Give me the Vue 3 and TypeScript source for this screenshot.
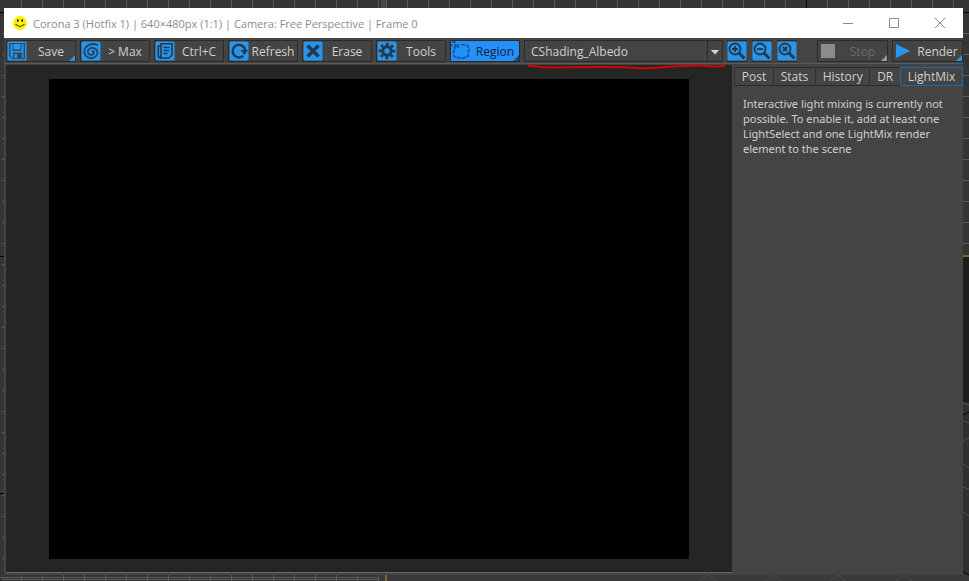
<script setup lang="ts">
import { ref } from 'vue'

interface Tool {
  id: string
  label: string
  menu?: boolean
}

const tools: Tool[] = [
  { id: 'save', label: 'Save', menu: true },
  { id: 'max', label: '> Max' },
  { id: 'copy', label: 'Ctrl+C' },
  { id: 'refresh', label: 'Refresh' },
  { id: 'erase', label: 'Erase' },
  { id: 'tools', label: 'Tools' },
  { id: 'region', label: 'Region', menu: true },
]
const zooms = [
  { id: 'in', label: 'Zoom in', d: 'M5 8h6M8 5v6' },
  { id: 'out', label: 'Zoom out', d: 'M5 8h6' },
  { id: 'reset', label: 'Reset zoom', d: 'M6 6l4 4M10 6l-4 4' },
]
const tabs = ['Post', 'Stats', 'History', 'DR', 'LightMix']
const activeTab = ref('LightMix')
const regionOn = ref(true)
const element = ref('CShading_Albedo')

function press(id: string) {
  if (id === 'region') regionOn.value = !regionOn.value
}
</script>

<template>
  <div class="desktop">
    <svg class="scene" aria-hidden="true">
      <defs>
        <pattern id="grid-left" width="21" height="21" patternUnits="userSpaceOnUse">
          <path d="M0.5 0V21M0 12.5H21" stroke="#5a5a5a" fill="none" />
        </pattern>
        <pattern id="grid-right" width="21" height="21" patternUnits="userSpaceOnUse">
          <path d="M8.5 0V21M0 12.5H21" stroke="#5a5a5a" fill="none" />
        </pattern>
      </defs>
      <rect width="100%" height="100%" fill="#353535" />
      <rect x="2" width="380" height="100%" fill="url(#grid-left)" />
      <rect x="386" width="100%" height="100%" fill="url(#grid-right)" />
      <rect x="381" y="0" width="5" height="8" fill="#484848" />
      <path d="M806.5 0V8M963 12.5H969M0 12.5H4M0 256.5H4M0 493.5H4" stroke="#050505" />
      <rect x="380" y="574" width="589" height="7" fill="#393939" />
      <path d="M0 577.5H379" stroke="#5a5a5a" />
      <path d="M386 575V581" stroke="#75683b" stroke-width="2" />
      <path d="M700 581l8-6 8 6M765 581l8-6 8 6M830 581l8-6 8 6M896 581l8-6 8 6" stroke="#4b4b4b" fill="none" />
      <rect x="963" y="257" width="6" height="145" fill="#1d1d1c" />
      <rect x="963" y="402" width="6" height="172" fill="#303030" />
      <path d="M963 256H969" stroke="#75683b" stroke-width="2" />
      <path d="M963 415l6-3M963 572l6 3" stroke="#000" stroke-width="1" />
      <path d="M963 403l6 2M963 421l6 2M963 441l6-3M963 464l6 4M963 487l6 2M963 512l6 4" stroke="#505050" />
    </svg>

    <main class="window">
      <header class="titlebar">
        <svg class="smiley" viewBox="0 0 14 14" aria-hidden="true">
          <circle cx="7" cy="7" r="7" fill="#fff200" />
          <path d="M2.500 8Q7 13 11.500 8" stroke="#332f00" stroke-width="1.100" fill="none" />
          <ellipse cx="4.800" cy="4.600" rx="0.900" ry="1.500" fill="#222" />
          <ellipse cx="9.200" cy="4.600" rx="0.900" ry="1.500" fill="#222" />
        </svg>
        <h1>Corona 3 (Hotfix 1) | 640×480px (1:1) | Camera: Free Perspective | Frame 0</h1>
        <button class="caption" aria-label="Minimize">
          <svg viewBox="0 0 12 12"><path d="M1 6.5H11" /></svg>
        </button>
        <button class="caption" aria-label="Maximize">
          <svg viewBox="0 0 12 12"><path d="M1.5 1.5h9v9h-9z" /></svg>
        </button>
        <button class="caption" aria-label="Close">
          <svg viewBox="0 0 12 12"><path d="M1 1L11 11M11 1L1 11" /></svg>
        </button>
      </header>

      <div class="toolbar">
        <button
          v-for="t in tools"
          :key="t.id"
          class="tool"
          :class="{ on: t.id === 'region' && regionOn, menu: t.menu }"
          @click="press(t.id)"
        >
          <svg class="icon" viewBox="0 0 20 20" aria-hidden="true">
            <rect v-if="t.id !== 'region'" x="0.5" y="0.5" width="19" height="19" rx="1.500" fill="#2795ec" />
            <g v-if="t.id === 'save'">
              <path d="M2 2h16v16H5l-3-3z" fill="#2b4a63" />
              <path d="M3.500 3h2v7h9V3h2v14h-1.500v-5.500H6V17h-.5l-2-2z" fill="#2795ec" />
              <path d="M6.500 3h7v5.500h-7z" fill="#2795ec" />
              <path d="M7.500 13h2.500v4h-2.500z" fill="#2795ec" />
            </g>
            <g v-else-if="t.id === 'max'" fill="none" stroke="#24445e" stroke-width="1.800" stroke-linecap="round">
              <path d="M16.500 4C11 1.500 4 4 3.300 10C3 15 7 17.500 11 17C15.500 16.400 17.500 12.500 16 9.500C14.500 6.500 9.500 6 7.500 8.500C5.500 11 7.500 14 10.500 13.800C13 13.500 13.600 10.500 11.500 10" />
            </g>
            <g v-else-if="t.id === 'copy'" fill="none" stroke="#24384a" stroke-width="1.600">
              <path d="M6 2.800h11v11.200l-3 3H6z" />
              <path d="M6 5H3.300v10.500l2.700 2M8.500 6.500h6M8.500 9.500h6M8.500 12.500h4" />
            </g>
            <g v-else-if="t.id === 'refresh'">
              <path d="M14.200 14.800A6.300 6.300 0 1 1 16.200 9.500" fill="none" stroke="#24384a" stroke-width="2.400" />
              <path d="M11.500 9h7.500l-3.500 5z" fill="#24384a" />
            </g>
            <path v-else-if="t.id === 'erase'" d="M4.500 4.500L15.500 15.500M15.500 4.500L4.500 15.500" stroke="#24384a" stroke-width="3.400" />
            <g v-else-if="t.id === 'tools'" fill="none" stroke="#24384a">
              <circle cx="10" cy="10" r="4.300" stroke-width="3.200" />
              <circle cx="10" cy="10" r="7" stroke-width="2.600" stroke-dasharray="2.750 2.750" stroke-dashoffset="1.370" />
            </g>
            <g v-else fill="none" stroke="#155a9c">
              <path d="M6 5Q3 5 3.500 8.500L2.500 12Q2.500 17.500 7 16.500L10 17.500L14 16.500Q18.500 16 17 12L18 8Q17 3 13 4L9 3" stroke-width="1.800" stroke-dasharray="4 1" />
              <path d="M0 4h8M4 0v8M1 1h2M6 6h2" stroke-width="1.800" stroke-dasharray="2 1" />
            </g>
          </svg>
          <span>{{ t.label }}</span>
        </button>

        <div class="combo">
          <select v-model="element" aria-label="Render element">
            <option>CShading_Albedo</option>
            <option>Beauty</option>
          </select>
          <svg class="arrow" viewBox="0 0 8 5" aria-hidden="true"><path d="M0 0h8L4 4.500z" fill="#d6d6d6" /></svg>
          <svg class="underline" viewBox="0 0 198 6" preserveAspectRatio="none" aria-hidden="true">
            <path d="M1 1.500C8 2 14 4 30 3.500S54 3 66 3S92 2.600 107 4S134 3 145 2.500S166 1 173 1.500S187 3.600 197 1.500" />
          </svg>
        </div>

        <div class="zooms">
          <button v-for="z in zooms" :key="z.id" class="zoom" :aria-label="z.label">
            <svg class="icon" viewBox="0 0 20 20">
              <rect x="0.5" y="0.5" width="19" height="19" rx="1.500" fill="#2795ec" />
              <g fill="none" stroke="#24384a">
                <circle cx="8" cy="8" r="5.500" stroke-width="1.800" />
                <path :d="z.d" stroke-width="1.800" />
                <path d="M12 12l5.500 5.500" stroke-width="3" />
              </g>
            </svg>
          </button>
        </div>

        <button class="tool menu stop" disabled>
          <svg class="icon" viewBox="0 0 20 20" aria-hidden="true"><rect x="3" y="3" width="14" height="14" fill="#8b8b8b" /></svg>
          <span>Stop</span>
        </button>
        <button class="tool menu render">
          <svg class="icon" viewBox="0 0 20 20" aria-hidden="true"><path d="M3 3l14 7-14 7z" fill="#2795ec" /></svg>
          <span>Render</span>
        </button>
      </div>

      <div class="body">
        <section class="viewport" aria-label="Render view">
          <canvas width="640" height="480"></canvas>
        </section>
        <aside class="panel">
          <div class="tabs" role="tablist">
            <button
              v-for="tab in tabs"
              :key="tab"
              role="tab"
              :aria-selected="tab === activeTab"
              :class="{ active: tab === activeTab }"
              @click="activeTab = tab"
            >{{ tab }}</button>
          </div>
          <p>Interactive light mixing is currently not possible. To enable it, add at least one LightSelect and one LightMix render element to the scene</p>
        </aside>
      </div>
    </main>
  </div>
</template>

<style>
body {
  margin: 0;
  background: #353535;
}
</style>

<style scoped>
* {
  box-sizing: border-box;
}
.desktop {
  position: relative;
  display: flex;
  min-height: 100vh;
  padding: 8px 6px 6px 4px;
  font: 12px/15px "Open Sans", "Noto Sans", sans-serif;
  color: #d0d0d0;
}
.scene {
  position: absolute;
  inset: 0;
  width: 100%;
  height: 100%;
}
.window {
  position: relative;
  flex: 1;
  min-width: 0;
  display: flex;
  flex-direction: column;
  background: #444;
}
button,
select {
  margin: 0;
  padding: 0;
  border: 0;
  background: none;
  font: inherit;
  color: inherit;
}
.titlebar {
  display: flex;
  align-items: center;
  height: 30px;
  padding-left: 9px;
  background: #fff;
  color: #8c8c8c;
}
.smiley {
  width: 14px;
  height: 14px;
  margin-right: 6px;
}
h1 {
  flex: 1;
  margin: 0;
  font-size: 11px;
  font-weight: 400;
  white-space: nowrap;
}
.caption {
  display: flex;
  align-items: center;
  justify-content: center;
  width: 46px;
  height: 30px;
}
.caption svg {
  width: 12px;
  height: 12px;
  fill: none;
  stroke: #8a8a8a;
}
.toolbar {
  display: flex;
  gap: 4px;
  padding: 2px 0 1px 2px;
  border-bottom: 1px solid #5a5a5a;
}
.tool {
  position: relative;
  display: flex;
  align-items: center;
  width: 70px;
  height: 22px;
  border: 1px solid #2b2b2b;
  background: #444;
}
.icon {
  flex: none;
  display: block;
  width: 20px;
  height: 20px;
}
.tool span {
  flex: 1;
  text-align: center;
  white-space: nowrap;
}
.menu::after {
  content: "";
  position: absolute;
  right: 0;
  bottom: 0;
  border: 3px solid transparent;
  border-right-color: #2795ec;
  border-bottom-color: #2795ec;
}
.on {
  background: #2490fa;
  color: #10243a;
}
.on::after {
  border-color: transparent;
  border-right-color: #174f88;
  border-bottom-color: #174f88;
}
.stop,
.render {
  width: 71px;
}
.stop {
  color: #6b6b6b;
}
.stop::after {
  border-right-color: #9a9a9a;
  border-bottom-color: #9a9a9a;
}
.combo {
  position: relative;
  flex: 1;
  min-width: 0;
}
select {
  appearance: none;
  display: block;
  width: 100%;
  height: 22px;
  padding: 0 20px 0 6px;
  border: 1px solid #2b2b2b;
  background: linear-gradient(#2b2b2b, #2b2b2b) right 14px top / 1px 100% no-repeat #444;
}
.arrow {
  position: absolute;
  right: 4px;
  top: 10px;
  width: 8px;
  height: 5px;
  pointer-events: none;
}
.underline {
  position: absolute;
  left: 3px;
  top: 24px;
  width: 100%;
  height: 6px;
  z-index: 1;
  pointer-events: none;
}
.underline path {
  fill: none;
  stroke: #d90000;
  stroke-width: 2;
}
.zooms {
  display: flex;
  gap: 5px;
  margin-right: 16px;
}
.zoom {
  display: flex;
  border: 1px solid #2b2b2b;
  border-width: 1px 0;
}
.body {
  flex: 1;
  display: flex;
  padding: 1px 0 2px 2px;
}
.viewport {
  flex: 1;
  display: flex;
  align-items: center;
  justify-content: center;
  min-width: 0;
  background: #252525;
  border-bottom: 1px solid #666;
}
canvas {
  display: block;
  max-width: 100%;
  background: #000;
}
.panel {
  width: 231px;
}
.tabs {
  display: flex;
  padding: 2px 0 0 2px;
}
.tabs button {
  flex: 1 1 auto;
  height: 19px;
  padding: 0 4px;
  border: 1px solid #2b2b2b;
  border-left-color: #303030;
  border-right: 0;
  border-radius: 3px 0 0 0;
}
.tabs .active {
  border: 1px solid #1d6ba8;
  border-radius: 0;
}
.panel p {
  margin: 10px 10px 0 11px;
  font-family: "Noto Sans", "Open Sans", sans-serif;
  font-size: 11px;
}
</style>
